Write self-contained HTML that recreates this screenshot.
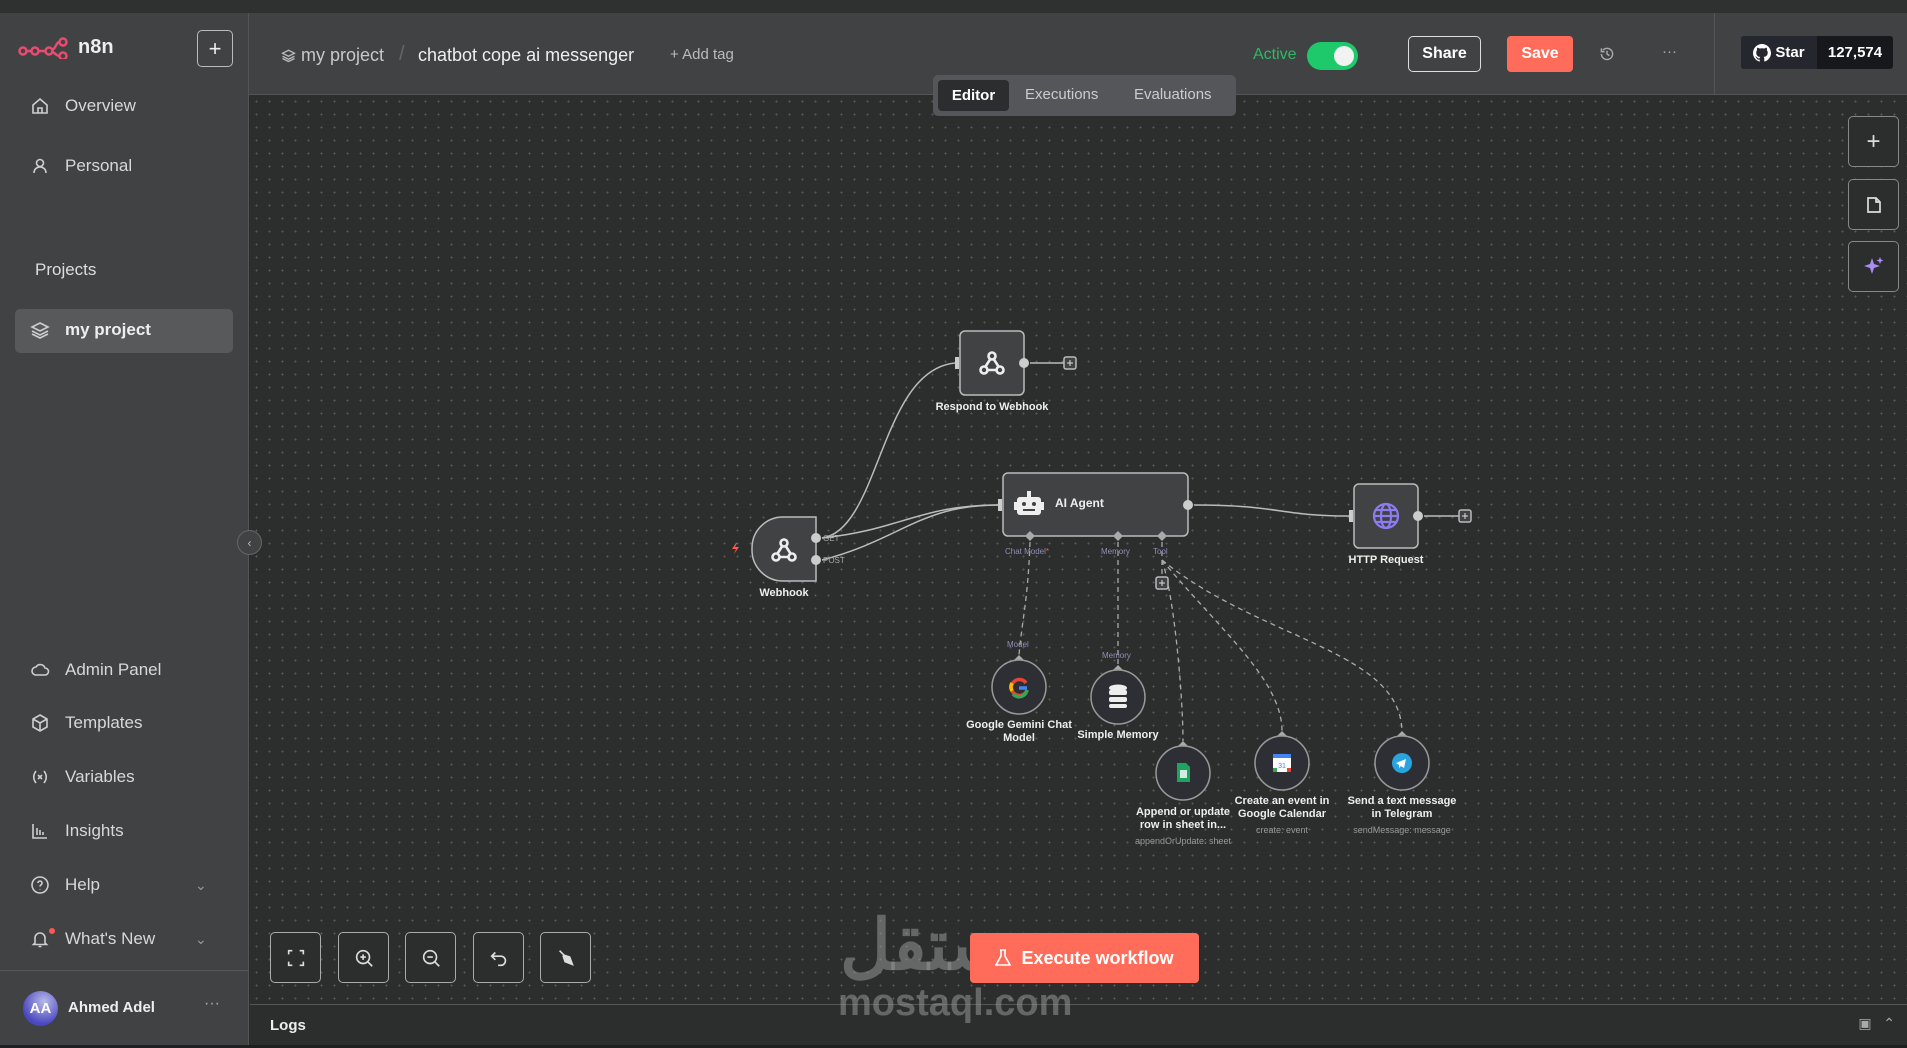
<!DOCTYPE html>
<html><head><meta charset="utf-8">
<style>
*{box-sizing:border-box;margin:0;padding:0}
body{width:1907px;height:1048px;overflow:hidden;background:#2a2b2b;font-family:"Liberation Sans",sans-serif;position:relative;color:#ddd}
.abs{position:absolute}
#top{left:0;top:0;width:1907px;height:13px;background:#2f3030}
#side{left:0;top:13px;width:249px;height:1032px;background:#414244;border-right:1px solid #535456}
#hdr{left:249px;top:13px;width:1658px;height:82px;background:#414244;border-bottom:1px solid #555}
#canvas{left:250px;top:95px;width:1657px;height:909px;background-color:#2c2d2d;background-image:radial-gradient(circle,#5a5a5a 0.9px,transparent 1.1px);background-size:13px 13px}
#logs{left:250px;top:1004px;width:1657px;height:41px;background:#2c2d2d;border-top:1px solid #555}
#bot{left:0;top:1045px;width:1907px;height:3px;background:#1e1f1f}
.nav{position:absolute;left:30px;font-size:17px;color:#d8d8d8;display:flex;align-items:center}
.nav svg{width:20px;height:20px;margin-right:15px;stroke:#cfcfcf;fill:none;stroke-width:1.6}
.btn{position:absolute;border:1px solid #bbb;border-radius:5px;display:flex;align-items:center;justify-content:center}
.cb{position:absolute;width:51px;height:51px;border:1px solid #aaa;border-radius:5px;background:#2c2d2d;display:flex;align-items:center;justify-content:center}
.cb svg{width:22px;height:22px;stroke:#ddd;fill:none;stroke-width:1.8}
.rb{position:absolute;left:1848px;width:51px;height:51px;border:1px solid #888;border-radius:5px;background:#2c2d2d;display:flex;align-items:center;justify-content:center}
.lbl{position:absolute;font-size:11px;font-weight:bold;color:#eee;text-align:center;line-height:13px}
.sub{position:absolute;font-size:9px;color:#999;text-align:center}
</style></head><body>
<div class="abs" id="top"></div>
<div class="abs" id="side">
  <svg class="abs" style="left:18px;top:24px" width="52" height="22" viewBox="0 0 52 22"><g fill="none" stroke="#ea4b71" stroke-width="2.5"><circle cx="5" cy="14" r="3.5"/><circle cx="17" cy="14" r="3.5"/><circle cx="31" cy="14" r="3.5"/><circle cx="45" cy="5" r="3.5"/><circle cx="45" cy="19" r="3.5"/><path d="M8.5 14h5M20.5 14h7M34 13c4-1 4-8 7.5-8M34 15c4 1 4 4 7.5 4"/></g></svg>
  <div class="abs" style="left:78px;top:23px;font-size:20px;font-weight:bold;color:#eee">n8n</div>
  <div class="btn" style="left:197px;top:17px;width:36px;height:37px;color:#eee;font-size:22px">+</div>
  <div class="nav" style="top:83px"><svg viewBox="0 0 20 20"><path d="M3 9l7-6 7 6v8H3z M8 17v-5h4v5"/></svg>Overview</div>
  <div class="nav" style="top:143px"><svg viewBox="0 0 20 20"><circle cx="10" cy="7" r="3.5"/><path d="M4 17c0-4 3-6 6-6s6 2 6 6"/></svg>Personal</div>
  <div class="abs" style="left:35px;top:247px;font-size:17px;color:#ddd">Projects</div>
  <div class="abs" style="left:15px;top:296px;width:218px;height:44px;background:#58595b;border-radius:5px"></div>
  <div class="nav" style="top:307px;font-weight:bold;color:#eee"><svg viewBox="0 0 20 20"><path d="M10 3l8 4-8 4-8-4z M2 11l8 4 8-4 M2 14l8 4 8-4"/></svg>my project</div>
  <div class="nav" style="top:647px"><svg viewBox="0 0 20 20"><path d="M6 15a4 4 0 010-8 5 5 0 019 1 3.5 3.5 0 010 7z"/></svg>Admin Panel</div>
  <div class="nav" style="top:700px"><svg viewBox="0 0 20 20"><path d="M10 2l7 4v8l-7 4-7-4V6z M3 6l7 4 7-4 M10 10v8"/></svg>Templates</div>
  <div class="nav" style="top:754px"><svg viewBox="0 0 20 20"><path d="M6 4c-3 4-3 8 0 12 M14 4c3 4 3 8 0 12 M8 8l4 4 M12 8l-4 4"/></svg>Variables</div>
  <div class="nav" style="top:808px"><svg viewBox="0 0 20 20"><path d="M3 3v14h14 M7 14V7 M10 14V9 M13 14v-3"/></svg>Insights</div>
  <div class="nav" style="top:862px"><svg viewBox="0 0 20 20"><circle cx="10" cy="10" r="8"/><path d="M8 8a2 2 0 114 0c0 2-2 2-2 3.5 M10 14v.5"/></svg>Help</div>
  <div class="abs" style="left:195px;top:864px;color:#999;font-size:14px">&#8964;</div>
  <div class="nav" style="top:916px"><svg viewBox="0 0 20 20"><path d="M5 14V9a5 5 0 0110 0v5l1.5 1.5h-13z M8.5 17.5h3"/></svg>What's New</div>
  <div class="abs" style="left:49px;top:915px;width:6px;height:6px;border-radius:50%;background:#f55"></div>
  <div class="abs" style="left:195px;top:918px;color:#999;font-size:14px">&#8964;</div>
  <div class="abs" style="left:0;top:957px;width:249px;height:1px;background:#555"></div>
  <div class="abs" style="left:23px;top:978px;width:35px;height:35px;border-radius:50%;background:radial-gradient(circle at 60% 30%,#b7b9e8,#4a47c0 70%);color:#fff;font-weight:bold;font-size:15px;display:flex;align-items:center;justify-content:center">AA</div>
  <div class="abs" style="left:68px;top:986px;font-size:15px;font-weight:bold;color:#eee">Ahmed Adel</div>
  <div class="abs" style="left:204px;top:982px;font-size:16px;color:#aaa">···</div>
</div>
<div class="abs" style="left:237px;top:530px;width:25px;height:25px;border-radius:50%;background:#414244;border:1px solid #666;color:#bbb;font-size:12px;display:flex;align-items:center;justify-content:center;z-index:5">&#8249;</div>
<div class="abs" id="hdr">
  <svg class="abs" style="left:32px;top:35px" width="15" height="15" viewBox="0 0 20 20" fill="none" stroke="#bbb" stroke-width="1.7"><path d="M10 3l8 4-8 4-8-4z M2 11l8 4 8-4 M2 14l8 4 8-4"/></svg>
  <div class="abs" style="left:52px;top:32px;font-size:18px;color:#c8c8c8">my project</div>
  <div class="abs" style="left:150px;top:30px;font-size:20px;color:#666">/</div>
  <div class="abs" style="left:169px;top:32px;font-size:18px;color:#eee">chatbot cope ai messenger</div>
  <div class="abs" style="left:421px;top:33px;font-size:15px;color:#bbb">+ Add tag</div>
  <div class="abs" style="left:1004px;top:33px;font-size:16px;color:#2fb866">Active</div>
  <div class="abs" style="left:1058px;top:29px;width:51px;height:28px;border-radius:14px;background:#1ec96b"><div class="abs" style="left:27px;top:4px;width:20px;height:20px;border-radius:50%;background:#f2f2f2"></div></div>
  <div class="btn" style="left:1159px;top:23px;width:73px;height:36px;color:#fff;font-size:16px;font-weight:bold;border-color:#ddd">Share</div>
  <div class="abs" style="left:1258px;top:23px;width:66px;height:36px;border-radius:4px;background:#ff6d5a;color:#fff;font-size:16px;font-weight:bold;display:flex;align-items:center;justify-content:center">Save</div>
  <svg class="abs" style="left:1350px;top:33px" width="16" height="16" viewBox="0 0 20 20" fill="none" stroke="#aaa" stroke-width="1.8"><path d="M3 10a7 7 0 102-5 M3 3v4h4 M10 6v4l3 2"/></svg>
  <div class="abs" style="left:1413px;top:30px;font-size:15px;color:#aaa">···</div>
  <div class="abs" style="left:1465px;top:0;width:1px;height:82px;background:#555"></div>
  <div class="abs" style="left:1492px;top:23px;width:152px;height:33px;background:#16181c;border-radius:3px;display:flex;font-size:15px;font-weight:bold;color:#fff">
    <div style="width:76px;background:#24272d;display:flex;align-items:center;justify-content:center;gap:4px;border-radius:3px 0 0 3px"><svg width="18" height="18" viewBox="0 0 16 16"><path fill="#fff" d="M8 0C3.6 0 0 3.6 0 8c0 3.5 2.3 6.5 5.5 7.6.4.1.5-.2.5-.4v-1.4c-2.2.5-2.7-1-2.7-1-.4-.9-.9-1.2-.9-1.2-.7-.5.1-.5.1-.5.8.1 1.2.8 1.2.8.7 1.3 1.9.9 2.3.7.1-.5.3-.9.5-1.1-1.8-.2-3.6-.9-3.600-4 0-.9.3-1.6.8-2.1-.1-.2-.4-1 .1-2.1 0 0 .7-.2 2.2.8.6-.2 1.3-.3 2-.3s1.4.1 2 .3c1.5-1 2.2-.8 2.2-.8.4 1.1.2 1.9.1 2.1.5.6.8 1.3.8 2.1 0 3.1-1.9 3.7-3.6 3.9.3.3.5.8.5 1.5v2.2c0 .2.1.5.6.4C13.700 14.5 16 11.5 16 8c0-4.4-3.6-8-8-8z"/></svg>Star</div>
    <div style="flex:1;display:flex;align-items:center;justify-content:center">127,574</div>
  </div>
</div>
<div class="abs" id="canvas"></div>
<div class="abs" style="left:933px;top:75px;width:303px;height:41px;background:#55565a;border-radius:5px;z-index:3">
  <div class="abs" style="left:5px;top:5px;width:71px;height:31px;background:#2c2d2e;border-radius:4px;color:#fff;font-size:15px;font-weight:bold;display:flex;align-items:center;justify-content:center">Editor</div>
  <div class="abs" style="left:92px;top:11px;font-size:15px;color:#ccc">Executions</div>
  <div class="abs" style="left:201px;top:11px;font-size:15px;color:#ccc">Evaluations</div>
</div>
<div class="rb" style="top:116px"><span style="color:#ddd;font-size:24px">+</span></div>
<div class="rb" style="top:179px"><svg width="20" height="20" viewBox="0 0 20 20" fill="none" stroke="#ddd" stroke-width="1.7"><path d="M4 3h8l4 4v10H4z M12 3v4h4"/></svg></div>
<div class="rb" style="top:241px"><svg width="24" height="24" viewBox="0 0 24 24" fill="#a98df5"><path d="M10 3l2 6 6 2-6 2-2 6-2-6-6-2 6-2z M18 2l1 2.5 2.5 1-2.5 1-1 2.5-1-2.5-2.5-1 2.5-1z"/></svg></div>

<svg class="abs" style="left:0;top:0" width="1907" height="1048" viewBox="0 0 1907 1048">
 <defs>
  <g id="wh" fill="none" stroke="#eee" stroke-width="2.6" stroke-linecap="round">
   <circle cx="0" cy="-7" r="3.5"/><circle cx="-8" cy="7" r="3.5"/><circle cx="8" cy="7" r="3.5"/>
   <path d="M-2 -3.5L-6.5 3.5 M-4.5 7H4.5 M2 -3.5L6.5 3.5"/>
   <path d="M-4 -10a6 6 0 0 1 8 0" stroke-width="0"/>
  </g>
 </defs>
 <g fill="none" stroke="#bbb" stroke-width="1.5">
  <path d="M822 538C880 530 880 370 955 363"/>
  <path d="M822 538C900 530 920 505 998 505"/>
  <path d="M822 560C900 540 920 505 998 505"/>
  <path d="M1194 505C1280 505 1280 516 1349 516"/>
  <path d="M1030 363h36 M1424 516h36"/>
 </g>
 <g fill="none" stroke="#aaa" stroke-width="1.3" stroke-dasharray="5 4">
  <path d="M1030 542C1028 600 1022 620 1019 655"/>
  <path d="M1118 542V665"/>
  <path d="M1162 542V576"/>
  <path d="M1162 560C1175 600 1183 700 1183 741"/>
  <path d="M1162 560C1220 630 1282 680 1282 731"/>
  <path d="M1162 560C1260 640 1400 650 1402 731"/>
 </g>
 <rect x="960" y="331" width="64" height="64" rx="5" fill="#414244" stroke="#bbb" stroke-width="1.5"/>
 <path d="M783 517h33v64h-33a31 31 0 0 1 -31 -31v-2a31 31 0 0 1 31 -31z" fill="#414244" stroke="#bbb" stroke-width="1.5"/>
 <rect x="1003" y="473" width="185" height="63" rx="5" fill="#414244" stroke="#bbb" stroke-width="1.5"/>
 <rect x="1354" y="484" width="64" height="64" rx="5" fill="#414244" stroke="#bbb" stroke-width="1.5"/>
 <g fill="#414244" stroke="#bbb" stroke-width="1.5">
  <rect x="1064" y="357" width="12" height="12" rx="2"/><rect x="1459" y="510" width="12" height="12" rx="2"/><rect x="1156" y="577" width="12" height="12" rx="2"/>
 </g>
 <g stroke="#ddd" stroke-width="1"><path d="M1070 360v6M1067 363h6M1465 513v6M1462 516h6M1162 580v6M1159 583h6"/></g>
 <g fill="#ccc">
  <circle cx="1024" cy="363" r="5"/><circle cx="816" cy="538" r="5"/><circle cx="816" cy="560" r="5"/><circle cx="1188" cy="505" r="5"/><circle cx="1418" cy="516" r="5"/>
  <rect x="955" y="357" width="4" height="12"/><rect x="998" y="499" width="4" height="12"/><rect x="1349" y="510" width="4" height="12"/>
 </g>
 <g fill="#aaa"><path d="M1030 531l5 5-5 5-5-5z M1118 531l5 5-5 5-5-5z M1162 531l5 5-5 5-5-5z M1019 655l5 5-5 5-5-5z M1118 665l5 5-5 5-5-5z M1183 741l5 5-5 5-5-5z M1282 731l5 5-5 5-5-5z M1402 731l5 5-5 5-5-5z"/></g>
 <g fill="#2e2f35" stroke="#999" stroke-width="1.5">
  <circle cx="1019" cy="687" r="27"/><circle cx="1118" cy="697" r="27"/><circle cx="1183" cy="773" r="27"/><circle cx="1282" cy="763" r="27"/><circle cx="1402" cy="763" r="27"/>
 </g>
 <use href="#wh" x="992" y="363"/>
 <use href="#wh" x="784" y="550"/>
 <g fill="#eee"><rect x="1017" y="497" width="24" height="18" rx="3"/><rect x="1027" y="491" width="4" height="6"/><rect x="1014" y="502" width="3" height="8"/><rect x="1041" y="502" width="3" height="8"/></g>
 <g fill="#414244"><circle cx="1024" cy="504" r="2"/><circle cx="1034" cy="504" r="2"/><rect x="1023" y="509" width="12" height="2"/></g>
 <g fill="none" stroke="#8b7cf0" stroke-width="2.2"><circle cx="1386" cy="516" r="12"/><ellipse cx="1386" cy="516" rx="5" ry="12"/><path d="M1374 516h24M1376 510h20M1376 522h20"/></g>
 <g fill="none" stroke-width="3.5"><path d="M1026 683a8 8 0 1 0 1 7" stroke="#ea4335"/><path d="M1013 694a8 8 0 0 0 14 -4" stroke="#34a853"/><path d="M1019 688h8" stroke="#4285f4"/><path d="M1012 683a8 8 0 0 0 0 8" stroke="#fbbc05"/></g>
 <g fill="#eee"><ellipse cx="1118" cy="688" rx="9" ry="3.5"/><rect x="1109" y="690" width="18" height="5" rx="2"/><rect x="1109" y="697" width="18" height="5" rx="2"/><rect x="1109" y="704" width="18" height="4" rx="2"/></g>
 <path d="M1177 763h9l4 4v15h-13z" fill="#1ea362"/><rect x="1180" y="770" width="7" height="8" fill="#fff" opacity=".8"/>
 <rect x="1273" y="754" width="18" height="18" rx="2" fill="#fff"/><path d="M1273 754h18v4h-18z" fill="#4285f4"/><path d="M1287 768h4v4h-4z" fill="#ea4335"/><path d="M1273 768h4v4h-4z" fill="#34a853"/><text x="1282" y="768" font-size="7" fill="#4285f4" text-anchor="middle" font-family="Liberation Sans">31</text>
 <circle cx="1402" cy="763" r="10" fill="#2aa4e0"/><path d="M1396 763l10-4-2 9-3-2-2 2v-3z" fill="#fff"/>
 <path d="M736 543l-4 6h4l-2 5 5-7h-4l2-4z" fill="#ff5a4a"/>
 <g font-family="Liberation Sans" font-size="8" fill="#8f90b8">
  <text x="823" y="541" fill="#aaa">GET</text><text x="823" y="563" fill="#aaa">POST</text>
  <text x="1005" y="554">Chat Model<tspan fill="#f55">*</tspan></text><text x="1101" y="554">Memory</text><text x="1153" y="554">Tool</text>
  <text x="1007" y="647">Model</text><text x="1102" y="658">Memory</text>
 </g>
 <text x="1055" y="507" font-family="Liberation Sans" font-size="12" font-weight="bold" fill="#eee">AI Agent</text>
</svg>
<div class="lbl" style="left:917px;top:401px;width:150px">Respond to Webhook</div>
<div class="lbl" style="left:734px;top:587px;width:100px">Webhook</div>
<div class="lbl" style="left:1326px;top:554px;width:120px">HTTP Request</div>
<div class="lbl" style="left:954px;top:719px;width:130px">Google Gemini Chat<br>Model</div>
<div class="lbl" style="left:1058px;top:729px;width:120px">Simple Memory</div>
<div class="lbl" style="left:1118px;top:806px;width:130px">Append or update<br>row in sheet in...</div>
<div class="sub" style="left:1118px;top:836px;width:130px">appendOrUpdate: sheet</div>
<div class="lbl" style="left:1217px;top:795px;width:130px">Create an event in<br>Google Calendar</div>
<div class="sub" style="left:1217px;top:825px;width:130px">create: event</div>
<div class="lbl" style="left:1337px;top:795px;width:130px">Send a text message<br>in Telegram</div>
<div class="sub" style="left:1337px;top:825px;width:130px">sendMessage: message</div>

<div class="cb" style="left:270px;top:932px"><svg viewBox="0 0 24 24"><path d="M4 8V4h4M16 4h4v4M20 16v4h-4M8 20H4v-4"/></svg></div>
<div class="cb" style="left:338px;top:932px"><svg viewBox="0 0 24 24"><circle cx="11" cy="11" r="7"/><path d="M16 16l5 5M8 11h6M11 8v6"/></svg></div>
<div class="cb" style="left:405px;top:932px"><svg viewBox="0 0 24 24"><circle cx="11" cy="11" r="7"/><path d="M16 16l5 5M8 11h6"/></svg></div>
<div class="cb" style="left:473px;top:932px"><svg viewBox="0 0 24 24"><path d="M8 6L4 10l4 4M4 10h10a5 5 0 010 10h-3"/></svg></div>
<div class="cb" style="left:540px;top:932px"><svg viewBox="0 0 24 24"><path d="M5 4l6 6" /><path d="M10 9l6 2 3 8-8-3-2-6z" fill="#ddd"/></svg></div>

<div class="abs" id="logs"><div class="abs" style="left:20px;top:12px;font-size:15px;font-weight:bold;color:#eee">Logs</div>
<div class="abs" style="right:12px;top:10px;color:#aaa;font-size:14px">&#9635;&nbsp;&nbsp;&nbsp;&#8963;</div></div>
<div class="abs" id="bot"></div>

<div class="abs" style="left:840px;top:910px;font-family:'Liberation Sans','Noto Sans CJK SC',sans-serif;font-size:70px;font-weight:bold;color:rgba(150,150,150,.55);line-height:70px;direction:rtl">مستقل</div>
<div class="abs" style="left:970px;top:933px;width:229px;height:50px;background:#ff6d5a;border-radius:4px;color:#fff;font-size:18px;font-weight:bold;display:flex;align-items:center;justify-content:center;gap:10px"><svg width="16" height="18" viewBox="0 0 16 18" fill="none" stroke="#fff" stroke-width="1.6"><path d="M5 1h6M6 1v6L1 16h14L10 7V1"/></svg>Execute workflow</div>
<div class="abs" style="left:838px;top:983px;font-size:38px;font-weight:bold;color:rgba(150,150,150,.55);line-height:40px">mostaql.com</div>
</body></html>
